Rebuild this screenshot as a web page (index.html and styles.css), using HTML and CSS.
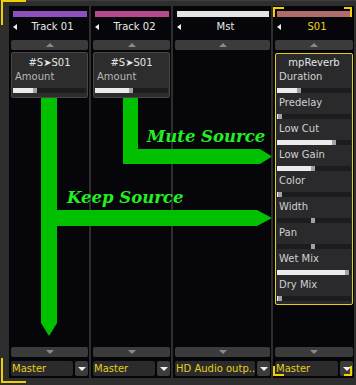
FILE: index.html
```html
<html>
	<head>
		<title>Mixer Sends</title>
		<link rel="stylesheet" href="styles.css">
	</head>
	<body>
		<div class="mixer">
			<div class="strip">
				<div class="color purple"></div>
				<div class="name"><span class="tri-left"></span><span class="label">Track 01</span></div>
				<div class="scroll"><span class="tri-up"></span></div>
				<div class="box send">
					<div class="box-title">#S&#x27A4;S01</div>
					<div class="param">Amount</div>
					<div class="slider"><div class="fill" style="width:20px"></div><div class="knob"></div></div>
				</div>
				<div class="space"></div>
				<div class="scroll"><span class="tri-down"></span></div>
				<div class="output"><span class="out-name">Master</span><span class="out-btn"><span class="tri-down white"></span></span></div>
			</div>

			<div class="strip">
				<div class="color pink"></div>
				<div class="name"><span class="tri-left"></span><span class="label">Track 02</span></div>
				<div class="scroll"><span class="tri-up"></span></div>
				<div class="box send">
					<div class="box-title">#S&#x27A4;S01</div>
					<div class="param">Amount</div>
					<div class="slider"><div class="fill" style="width:34px"></div><div class="knob"></div></div>
				</div>
				<div class="space"></div>
				<div class="scroll"><span class="tri-down"></span></div>
				<div class="output"><span class="out-name">Master</span><span class="out-btn"><span class="tri-down white"></span></span></div>
			</div>

			<div class="strip wide">
				<div class="color white"></div>
				<div class="name"><span class="tri-left"></span><span class="label">Mst</span></div>
				<div class="scroll"><span class="tri-up"></span></div>
				<div class="space"></div>
				<div class="scroll"><span class="tri-down"></span></div>
				<div class="output"><span class="out-name">HD Audio outp..</span><span class="out-btn"><span class="tri-down white"></span></span></div>
			</div>

			<div class="strip selected">
				<span class="corner tl"></span><span class="corner tr"></span>
				<span class="corner bl"></span><span class="corner br"></span>
				<div class="color rose"></div>
				<div class="name"><span class="tri-left"></span><span class="label">S01</span></div>
				<div class="scroll"><span class="tri-up"></span></div>
				<div class="box plugin">
					<div class="box-title">mpReverb</div>
					<div class="param">Duration</div>
					<div class="slider"><div class="fill" style="width:20px"></div><div class="knob"></div></div>
					<div class="param">Predelay</div>
					<div class="slider"><div class="fill" style="width:1px"></div><div class="knob"></div></div>
					<div class="param">Low Cut</div>
					<div class="slider"><div class="fill" style="width:55px"></div><div class="knob"></div></div>
					<div class="param">Low Gain</div>
					<div class="slider"><div class="fill" style="width:34px"></div><div class="knob"></div></div>
					<div class="param">Color</div>
					<div class="slider"><div class="fill" style="width:1px"></div><div class="knob"></div></div>
					<div class="param">Width</div>
					<div class="slider center"><div class="fill" style="width:34px"></div><div class="knob"></div></div>
					<div class="param">Pan</div>
					<div class="slider center"><div class="fill" style="width:34px"></div><div class="knob"></div></div>
					<div class="param">Wet Mix</div>
					<div class="slider"><div class="fill" style="width:68px"></div><div class="knob"></div></div>
					<div class="param">Dry Mix</div>
					<div class="slider"><div class="fill" style="width:1px"></div><div class="knob"></div></div>
				</div>
				<div class="space"></div>
				<div class="scroll"><span class="tri-down"></span></div>
				<div class="output"><span class="out-name">Master</span><span class="out-btn"><span class="tri-down white"></span></span></div>
			</div>
		</div>

		<span class="frame-corner top"></span>
		<span class="frame-corner bottom"></span>

		<svg class="routing" width="356" height="385" viewBox="0 0 356 385">
			<polygon class="arrow" points="41,98 57,98 57,210 257,210 272,218 257,226 57,226 57,323 49,336 41,323"/>
			<polygon class="arrow" points="123,98 138,98 138,149 260,149 272,156.5 260,164 123,164"/>
			<text class="note" x="147" y="142">Mute Source</text>
			<text class="note" x="67" y="203">Keep Source</text>
		</svg>
	</body>
</html>
```

FILE: styles.css
```css
body {
	margin: 0;
	width: 356px;
	height: 385px;
	position: relative;
	overflow: hidden;
	background: #2e2e2e;
	font-family: "DejaVu Sans", sans-serif;
	font-size: 10px;
}

.mixer {
	display: flex;
	gap: 2px;
	height: 385px;
	box-sizing: border-box;
	padding: 5px 2px 7px 9px;
	border-top: 1px solid #3e3e3e;
}

.strip {
	position: relative;
	width: 80px;
	box-sizing: border-box;
	padding: 0 1px 2px 2px;
	display: flex;
	flex-direction: column;
	background: #06060a;
}

.strip.wide {
	width: 98px;
}

.strip.selected {
	width: 81px;
}

.color {
	height: 6px;
	margin: 5px 1px 0 2px;
}

.purple { background: #8e4fbc; }
.pink { background: #b54b8c; }
.white { background: #e4e4e4; }
.rose { background: #b06b6b; }

.name {
	height: 16px;
	margin-top: 2px;
	display: flex;
	align-items: center;
	color: #e8e8e8;
}

.name .label {
	flex: 1;
	text-align: center;
	line-height: 16px;
}

.selected .name .label {
	color: #ead21c;
}

.tri-left {
	width: 0;
	height: 0;
	margin-left: 2px;
	border-top: 3px solid transparent;
	border-bottom: 3px solid transparent;
	border-right: 4px solid #eeeeee;
}

.scroll {
	height: 10px;
	margin-top: 5px;
	background: #3b3b3b;
	border-radius: 2px;
	display: flex;
	align-items: center;
	justify-content: center;
}

.space + .scroll {
	margin-top: 0;
}

.tri-up {
	width: 0;
	height: 0;
	border-left: 4px solid transparent;
	border-right: 4px solid transparent;
	border-bottom: 4px solid #8a8a8a;
}

.tri-down {
	width: 0;
	height: 0;
	border-left: 4px solid transparent;
	border-right: 4px solid transparent;
	border-top: 4px solid #8a8a8a;
}

.tri-down.white {
	background: none;
	border-top-color: #f0f0f0;
}

.box {
	margin-top: 2px;
	padding: 3px 1px 4px 1px;
	background: #2d2d2d;
	border: 1px solid #464646;
	border-radius: 2px;
}

.box-title {
	line-height: 14px;
	text-align: center;
	color: #e4e4e4;
}

.param {
	line-height: 14px;
	padding-left: 2px;
	color: #b8b8b8;
}

.plugin {
	margin-top: 3px;
	padding: 2px 1px 0 1px;
	background: #2a2a2c;
	border-color: #e6cf12;
}

.plugin .param {
	color: #d0d0d0;
}

.slider {
	display: flex;
	height: 5px;
	margin-top: 4px;
	background: #1c1c1e;
	border-radius: 1px;
}

.plugin .slider {
	margin-bottom: 3px;
}

.slider .fill {
	background: #ececec;
}

.slider .knob {
	width: 4px;
	background: #a2a2a2;
}

.slider.center .fill {
	background: transparent;
}

.space {
	flex: 1;
}

.output {
	display: flex;
	gap: 2px;
	height: 15px;
	margin-top: 4px;
}

.out-name {
	flex: 1;
	overflow: hidden;
	white-space: nowrap;
	padding-left: 1px;
	line-height: 15px;
	color: #e6cf1c;
	background: #2b2b2b;
	border-radius: 2px;
}

.out-btn {
	width: 13px;
	display: flex;
	align-items: center;
	justify-content: center;
	background: #3c3c3c;
	border-radius: 2px;
}

/* selection brackets */
.corner {
	position: absolute;
	width: 9px;
	height: 8px;
	border: 0 solid #f0d000;
}

.corner.tl { top: 1px; left: 0; border-top-width: 2px; border-left-width: 2px; }
.corner.tr { top: 1px; right: 2px; border-top-width: 2px; border-right-width: 2px; width: 6px; }
.corner.bl { bottom: 2px; left: 0; border-bottom-width: 2px; border-left-width: 2px; }
.corner.br { bottom: 2px; right: 2px; border-bottom-width: 2px; border-right-width: 2px; width: 6px; }

.frame-corner {
	position: absolute;
	left: 1px;
	width: 23px;
	height: 23px;
	border: 0 solid #f0d000;
	border-left-width: 2px;
}

.frame-corner.top {
	top: 0;
	border-top-width: 2px;
}

.frame-corner.bottom {
	bottom: 2px;
	border-bottom-width: 2px;
}

.routing {
	position: absolute;
	top: 0;
	left: 0;
	pointer-events: none;
}

.routing .arrow {
	fill: #00c000;
}

.routing .note {
	fill: #22f022;
	font-family: "DejaVu Serif", serif;
	font-weight: bold;
	font-style: italic;
	font-size: 16.5px;
}
```
